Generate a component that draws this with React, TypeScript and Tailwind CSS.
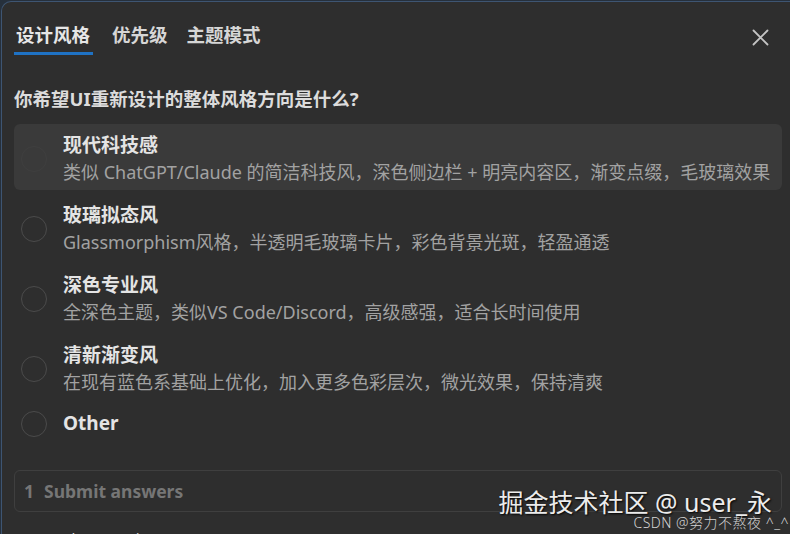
const font = { fontFamily: '"Noto Sans", "Noto Sans CJK SC", sans-serif' };

const options = [
  { title: '现代科技感', desc: '类似 ChatGPT/Claude 的简洁科技风，深色侧边栏 + 明亮内容区，渐变点缀，毛玻璃效果', active: true },
  { title: '玻璃拟态风', desc: 'Glassmorphism风格，半透明毛玻璃卡片，彩色背景光斑，轻盈通透' },
  { title: '深色专业风', desc: '全深色主题，类似VS Code/Discord，高级感强，适合长时间使用' },
  { title: '清新渐变风', desc: '在现有蓝色系基础上优化，加入更多色彩层次，微光效果，保持清爽' },
];

function Radio({ faint = false }: { faint?: boolean }) {
  return (
    <span
      className={`w-[26px] h-[26px] shrink-0 rounded-full border-[1.5px] ${faint ? 'border-[#3f3f3f]' : 'border-[#4b4b4b]'}`}
    />
  );
}

export default function App() {
  return (
    <div className="h-[534px] w-[790px] overflow-hidden bg-[#26303c] pl-[1px] pt-[1px]" style={font}>
      <div className="relative h-[540px] rounded-tl-[10px] border-l border-t border-[#3e5572] bg-[#2e2e2e] pl-3 pr-2">
        <div className="flex items-start justify-between">
          <div className="flex gap-[19px] pt-[20px]">
            <div className="flex flex-col">
              <span className="px-[2px] text-[18.5px] leading-[26px] font-semibold text-[#e6e6e6]">设计风格</span>
              <span className="mt-[4px] h-[3px] w-[79px] bg-[#1f72c4]" />
            </div>
            <span className="text-[18.5px] leading-[26px] font-semibold text-[#d6d6d6]">优先级</span>
            <span className="text-[18.5px] leading-[26px] font-semibold text-[#d6d6d6]">主题模式</span>
          </div>
          <svg className="mt-[27px] mr-[13px]" width="17" height="17" viewBox="0 0 17 17">
            <path d="M1.5 1.5 L15.5 15.5 M15.5 1.5 L1.5 15.5" stroke="#c4c4c4" strokeWidth="1.8" strokeLinecap="round" />
          </svg>
        </div>

        <h2 className="mt-[31px] text-[18.5px] leading-[26px] font-bold text-[#dcdcdc]">你希望UI重新设计的整体风格方向是什么?</h2>

        <div className="mt-[12px] flex flex-col gap-[4px]">
          {options.map((o) => (
            <div
              key={o.title}
              className={`flex items-center gap-[16px] rounded-md pl-[7px] pt-2 pb-1 ${o.active ? 'bg-[#3a3a3a]' : ''}`}
            >
              <Radio faint={o.active} />
              <div className="flex flex-col">
                <span className="text-[19px] leading-[27px] font-bold text-[#e4e4e4]">{o.title}</span>
                <span className="whitespace-nowrap text-[18px] leading-[27px] text-[#a2a2a2]">{o.desc}</span>
              </div>
            </div>
          ))}
          <div className="flex items-center gap-[16px] pl-[7px] pt-[6px] pb-[6px]">
            <Radio />
            <span className="text-[19px] leading-[27px] font-bold text-[#e4e4e4]">Other</span>
          </div>
        </div>

        <div className="mt-[27px] flex h-[42px] items-center gap-[10px] rounded-md border border-[#3f3f3f] px-[9px] text-[17.5px] font-bold text-[#767676]">
          <span>1</span>
          <span>Submit answers</span>
        </div>

        <p className="mt-[16px] text-[15px] leading-5 text-[#d8d8d8]">Don't ask me again</p>

        <div className="absolute right-[18px] top-[483px] text-[25px] leading-[34px] text-[#ececec] [text-shadow:1px_1px_2px_#000]">
          掘金技术社区 @ user_永
        </div>
        <div className="absolute right-[1px] top-[511px] text-[14px] leading-[20px] font-light tracking-[0.5px] text-[#d4d4d4]">
          CSDN @努力不熬夜 ^_^
        </div>
      </div>
    </div>
  );
}
